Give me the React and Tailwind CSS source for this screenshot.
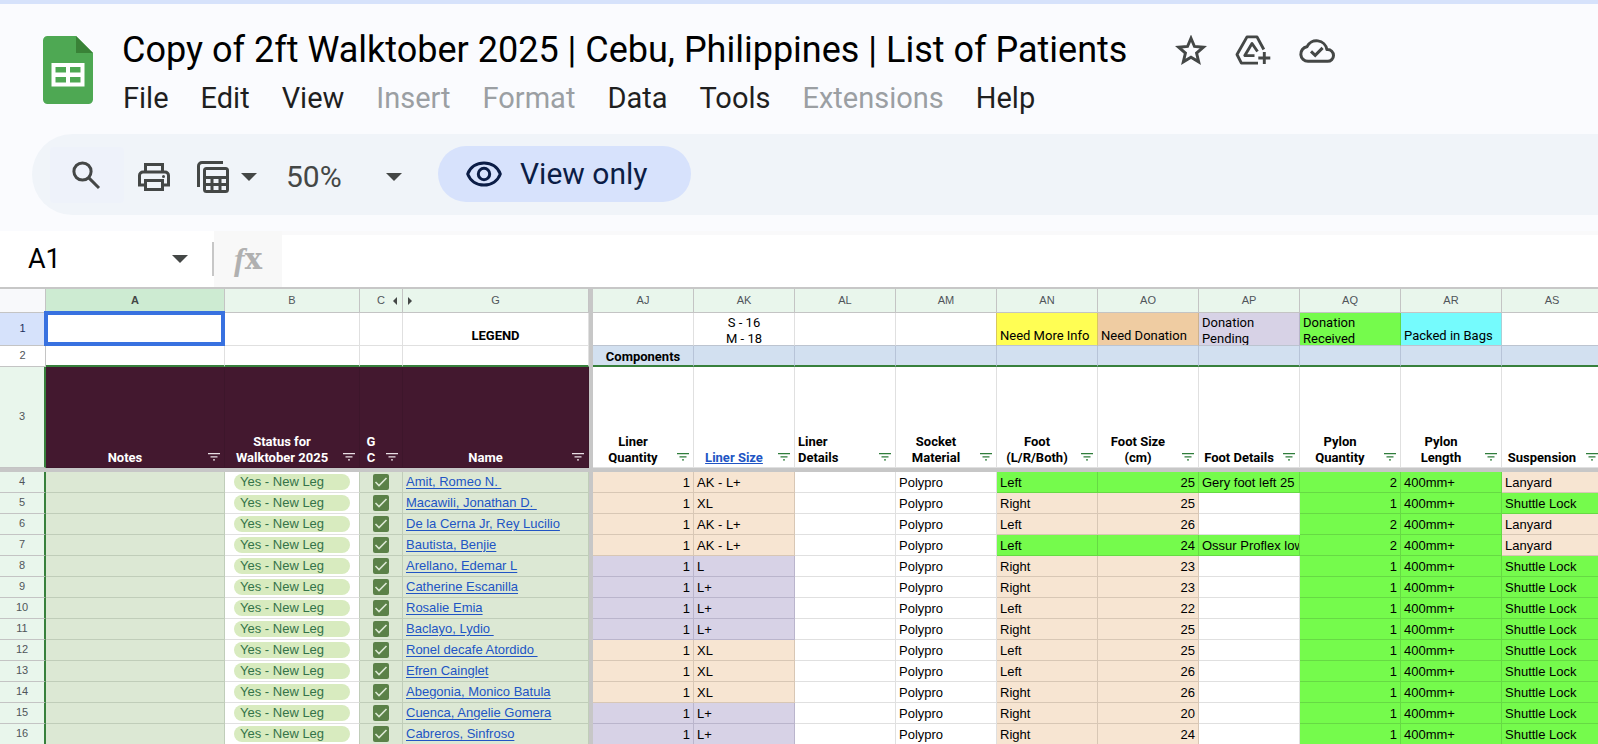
import React from "react";

const SANS = "font-['Roboto','Noto_Sans',sans-serif]";
const ARIAL = "font-['Liberation_Sans',Arial,sans-serif]";

/* Fill and grid-line classes for each kind of cell. */
const TONES = {
  white: { fill: "bg-white", line: "border-[#e0e0e0]" },
  sage: { fill: "bg-[#dce8d4]", line: "border-[#c0cdb9]" },
  plum: { fill: "bg-[#43182f]", line: "border-[#3d162b]" },
  sky: { fill: "bg-[#d2e0f0]", line: "border-[#b7c4d8]" },
  peach: { fill: "bg-[#f7e5d2]", line: "border-[#d8c7b5]" },
  lilac: { fill: "bg-[#d7d2e6]", line: "border-[#bab5cc]" },
  green: { fill: "bg-[#75fb4c]", line: "border-[#66da44]" },
  yellow: { fill: "bg-[#fffe54]", line: "border-[#d9c860]" },
  tan: { fill: "bg-[#efcca2]", line: "border-[#cdb38f]" },
  cyan: { fill: "bg-[#75fbfd]", line: "border-[#a9cfd6]" },
};

const MENUS = [
  ["File", true],
  ["Edit", true],
  ["View", true],
  ["Insert", false],
  ["Format", false],
  ["Data", true],
  ["Tools", true],
  ["Extensions", false],
  ["Help", true],
];

const FROZEN_COLS = ["A", "B", "C", "G"];
const SCROLL_COLS = ["AJ", "AK", "AL", "AM", "AN", "AO", "AP", "AQ", "AR", "AS"];

const LEGEND = [
  { tone: "white" },
  { tone: "white", lines: ["S - 16", "M - 18"], center: true },
  { tone: "white" },
  { tone: "white" },
  { tone: "yellow", lines: ["Need More Info"] },
  { tone: "tan", lines: ["Need Donation"] },
  { tone: "lilac", lines: ["Donation", "Pending"] },
  { tone: "green", lines: ["Donation", "Received"] },
  { tone: "cyan", lines: ["Packed in Bags"] },
  { tone: "white" },
];

const FROZEN_HEADS = [["Notes"], ["Status for", "Walktober 2025"], ["G", "C"], ["Name"]];
const SCROLL_HEADS = [
  { lines: ["Liner", "Quantity"] },
  { lines: ["Liner Size"], link: true },
  { lines: ["Liner", "Details"], left: true },
  { lines: ["Socket", "Material"] },
  { lines: ["Foot", "(L/R/Both)"] },
  { lines: ["Foot Size", "(cm)"] },
  { lines: ["Foot Details"] },
  { lines: ["Pylon", "Quantity"] },
  { lines: ["Pylon", "Length"] },
  { lines: ["Suspension"] },
];

const PATIENTS = [
  { name: "Amit, Romeo N.\u00a0", liner: "AK - L+", foot: "Left", size: 25, details: "Gery foot left 25", pylons: 2, received: true, lanyard: true },
  { name: "Macawili, Jonathan D.\u00a0", liner: "XL", foot: "Right", size: 25, pylons: 1 },
  { name: "De la Cerna Jr, Rey Lucilio", liner: "AK - L+", foot: "Left", size: 26, pylons: 2, lanyard: true },
  { name: "Bautista, Benjie", liner: "AK - L+", foot: "Left", size: 24, details: "Ossur Proflex low", pylons: 2, received: true, lanyard: true },
  { name: "Arellano, Edemar L", liner: "L", foot: "Right", size: 23, pylons: 1, pending: true },
  { name: "Catherine Escanilla", liner: "L+", foot: "Right", size: 23, pylons: 1, pending: true },
  { name: "Rosalie Emia", liner: "L+", foot: "Left", size: 22, pylons: 1, pending: true },
  { name: "Baclayo, Lydio\u00a0", liner: "L+", foot: "Right", size: 25, pylons: 1, pending: true },
  { name: "Ronel decafe Atordido\u00a0", liner: "XL", foot: "Left", size: 25, pylons: 1 },
  { name: "Efren Cainglet", liner: "XL", foot: "Left", size: 26, pylons: 1 },
  { name: "Abegonia, Monico Batula", liner: "XL", foot: "Right", size: 26, pylons: 1 },
  { name: "Cuenca, Angelie Gomera", liner: "L+", foot: "Right", size: 20, pylons: 1, pending: true },
  { name: "Cabreros, Sinfroso", liner: "L+", foot: "Right", size: 24, pylons: 1, pending: true },
];

function patientCells(p) {
  const liner = p.pending ? "lilac" : "peach";
  const foot = p.received ? "green" : "peach";
  return [
    { tone: liner, text: 1, right: true },
    { tone: liner, text: p.liner },
    { tone: "white", text: "" },
    { tone: "white", text: "Polypro" },
    { tone: foot, text: p.foot },
    { tone: foot, text: p.size, right: true },
    { tone: p.details ? "green" : "white", text: p.details || "" },
    { tone: "green", text: p.pylons, right: true },
    { tone: "green", text: "400mm+" },
    { tone: p.lanyard ? "peach" : "green", text: p.lanyard ? "Lanyard" : "Shuttle Lock" },
  ];
}

/* A white cell takes the grid line of a coloured neighbour on its right. */
function rightLine(cells, i) {
  const own = cells[i].tone;
  const next = cells[i + 1];
  return TONES[own === "white" && next ? next.tone : own].line;
}

function SheetsLogo() {
  return (
    <svg viewBox="0 0 50 68" className="h-[68px] w-[50px]" role="img" aria-label="Sheets">
      <path d="M4.500 0H33L50 17V63.500A4.500 4.500 0 0 1 45.500 68H4.500A4.500 4.500 0 0 1 0 63.500V4.500A4.500 4.500 0 0 1 4.500 0Z" fill="#4ea853" />
      <path d="M33 0L50 17H33Z" fill="#398237" />
      <path fillRule="evenodd" fill="#fff" d="M8.500 27H41.500V50.500H8.500ZM12.500 31V36.500H23V31ZM27 31V36.500H37.500V31ZM12.500 41V46.500H23V41ZM27 41V46.500H37.500V41Z" />
    </svg>
  );
}

function StarIcon() {
  return (
    <svg viewBox="1 0.500 30 28.500" className="h-[30px] w-8" aria-hidden="true">
      <path fill="none" stroke="#444746" strokeWidth="2.800" d="M16 3.600L19.300 11.400L27.800 12.100L21.300 17.700L23.300 26L16 21.600L8.700 26L10.700 17.700L4.200 12.100L12.700 11.400Z" />
    </svg>
  );
}

function DriveAddIcon() {
  return (
    <svg viewBox="0 0 36 32" className="h-8 w-9" fill="none" stroke="#444746" strokeWidth="2.900" aria-hidden="true">
      <path d="M28.800 15.500L22 2.900H12L2 20.500L6.400 29.100H23" strokeLinejoin="round" />
      <path d="M22.500 17.500L17 9.500L9.800 21.600H19.500" strokeLinejoin="round" />
      <path d="M29.300 18V30M23.300 24H35.300" />
    </svg>
  );
}

function CloudDoneIcon() {
  return (
    <svg viewBox="0 0 36 25" className="h-[25px] w-9" fill="none" stroke="#444746" strokeWidth="3" aria-hidden="true">
      <path d="M9 23.300A7.300 7.300 0 0 1 7.900 8.800A10.600 10.600 0 0 1 27.900 11.500H28.600A5.900 5.900 0 0 1 28.600 23.300Z" strokeLinejoin="round" />
      <path d="M12 13.400L16.200 17.400L23.600 9.900" />
    </svg>
  );
}

function SearchIcon() {
  return (
    <svg viewBox="0 0 30 30" className="h-[30px] w-[30px]" fill="none" stroke="#444746" strokeWidth="3" aria-hidden="true">
      <circle cx="11.500" cy="11.500" r="8.600" />
      <path d="M17.600 17.600L28 28" />
    </svg>
  );
}

function PrintIcon() {
  return (
    <svg viewBox="0 0 32 30" className="h-[30px] w-8" fill="none" stroke="#444746" strokeWidth="3" aria-hidden="true">
      <path d="M7.500 10V2.500H24.500V10" />
      <path d="M7 23H1.500V13.500A3.500 3.500 0 0 1 5 10H27A3.500 3.500 0 0 1 30.500 13.500V23H25" />
      <path d="M7.500 18.500H24.500V27.500H7.500Z" />
      <circle cx="25.500" cy="14.500" r="1.500" fill="#444746" stroke="none" />
    </svg>
  );
}

function FilterViewsIcon() {
  return (
    <svg viewBox="0 0 32 32" className="h-8 w-8" aria-hidden="true">
      <path d="M1.500 26V5A3.500 3.500 0 0 1 5 1.500H26" fill="none" stroke="#444746" strokeWidth="3" />
      <path fill="#444746" fillRule="evenodd" d="M9.500 6H28.500A3.500 3.500 0 0 1 32 9.500V28.500A3.500 3.500 0 0 1 28.500 32H9.500A3.500 3.500 0 0 1 6 28.500V9.500A3.500 3.500 0 0 1 9.500 6ZM9 9V15H29V9ZM9 18V22H13.500V18ZM16.500 18V22H21.500V18ZM24.500 18V22H29V18ZM9 25V29H13.500V25ZM16.500 25V29H21.500V25ZM24.500 25V29H29V25Z" />
    </svg>
  );
}

function EyeIcon() {
  return (
    <svg viewBox="0 0 36 26" className="h-[26px] w-9" fill="none" stroke="#0b1d46" strokeWidth="3" aria-hidden="true">
      <path d="M1.700 13C4.300 6 10.700 2 18 2S31.700 6 34.300 13C31.700 20 25.300 24 18 24S4.300 20 1.700 13Z" strokeLinejoin="round" />
      <circle cx="18" cy="13" r="5.700" />
    </svg>
  );
}

function Caret() {
  return (
    <svg viewBox="0 0 16 8" className="h-2 w-4" aria-hidden="true">
      <path d="M0 0H16L8 8Z" fill="#444746" />
    </svg>
  );
}

function FilterButton({ label, light }) {
  return (
    <button type="button" aria-label={"Filter " + label} className="absolute right-1 bottom-1 flex h-3 w-3 items-center">
      <svg viewBox="0 0 12 8" className="h-2 w-3" aria-hidden="true">
        <path fill={light ? "#e9dfe5" : "#2f7d3b"} d="M0 0H12V1.200H0ZM2.500 3.300H9.500V4.500H2.500ZM5 6.300H7V7.500H5Z" />
      </svg>
    </button>
  );
}

function HeadCell({ lines, tone, link, left }) {
  const label = lines.join(" ");
  const color = tone === "plum" ? "text-white" : "text-black";
  return (
    <th scope="col" className={`relative border-r border-b p-0 ${TONES[tone].fill} ${TONES[tone].line}`}>
      <div className={`flex h-[100px] flex-col justify-end pr-5 pb-px text-[13px] leading-4 font-bold whitespace-nowrap ${SANS} ${color} ${left ? "items-start pl-[3px]" : "items-center"}`}>
        {link ? (
          <a href="#liner-size" className="text-[#2155c4] underline">{label}</a>
        ) : (
          lines.map((l) => <span key={l}>{l}</span>)
        )}
      </div>
      <FilterButton label={label} light={tone === "plum"} />
    </th>
  );
}

function RowNumber({ n, className = "", height }) {
  return (
    <th scope="row" className={`border-b border-b-[#c4c4c4] p-0 text-[11px] font-normal ${className}`}>
      <div className={`flex items-center justify-center pb-[2px] ${height}`}>{n}</div>
    </th>
  );
}

const FREEZE = "bg-[#c7c7c7] p-0";

export default function App() {
  return (
    <div className={`min-h-screen w-full overflow-hidden bg-[#fafbfe] ${SANS}`}>
      <header className="border-t-4 border-[#d6e2fb]">
        <div className="flex items-start pt-8 pl-[43px]">
          <SheetsLogo />
          <div className="-mt-2 ml-[29px]">
            <div className="flex items-center">
              <h1 className="text-[36px] leading-[44px] whitespace-nowrap text-black">
                Copy of 2ft Walktober 2025 | Cebu, Philippines | List of Patients
              </h1>
              <div className="ml-12 flex items-center gap-7">
                <button type="button" aria-label="Star"><StarIcon /></button>
                <button type="button" aria-label="Add shortcut to Drive"><DriveAddIcon /></button>
                <button type="button" aria-label="See document status"><CloudDoneIcon /></button>
              </div>
            </div>
            <nav className="mt-2 ml-px flex gap-8 text-[29px] leading-9">
              {MENUS.map(([name, on]) => (
                <button key={name} type="button" disabled={!on} className={on ? "text-[#1f1f1f]" : "text-[#9b9fa3]"}>
                  {name}
                </button>
              ))}
            </nav>
          </div>
        </div>

        <div className="mt-[18px] ml-8 flex h-[81px] items-center rounded-l-full bg-[#f0f4f9] pl-[18px]">
          <button type="button" aria-label="Search the menus" className="flex h-14 w-[74px] items-center justify-center rounded bg-[#eef2fa] pr-[2px]">
            <SearchIcon />
          </button>
          <button type="button" aria-label="Print" className="mt-1 ml-[14px]"><PrintIcon /></button>
          <button type="button" aria-label="Filter views" className="mt-1 ml-[27px] flex items-center gap-3">
            <FilterViewsIcon />
            <Caret />
          </button>
          <button type="button" aria-label="Zoom" className="mt-1 ml-[29px] flex items-center text-[30px] leading-8 text-[#444746]">
            <span className="w-[100px] text-left">50%</span>
            <Caret />
          </button>
          <button type="button" className="mb-[2px] ml-9 flex h-14 w-[253px] items-center gap-[18px] rounded-full bg-[#d7e2fc] pl-7 text-[30px] text-[#0b1d46]">
            <EyeIcon />
            View only
          </button>
        </div>
      </header>

      <div className="mt-4 flex h-14 items-stretch bg-white">
        <div className="flex w-[214px] items-center pl-7">
          <input aria-label="Name box" defaultValue="A1" className="w-36 bg-transparent text-[27px] text-black outline-none" />
          <button type="button" aria-label="Named ranges"><Caret /></button>
          <span className="ml-auto h-[34px] w-[2px] bg-[#c7c7c7]" />
        </div>
        <div className="flex w-[68px] items-center justify-center bg-[#f8f8f8] text-[#b0b0b0]">
          <span className="font-['Liberation_Serif',serif] text-[32px] leading-8 font-bold italic">f</span>
          <span className="font-['DejaVu_Serif',serif] text-[29px] leading-8 font-bold">x</span>
        </div>
        <input aria-label="Formula" className="min-w-0 flex-1 border-t-4 border-[#f9f9fa] bg-white px-3 outline-none" />
      </div>

      <main className={`overflow-hidden border-t-2 border-[#c7c7c7] ${ARIAL}`}>
        <table className="w-[1603px] table-fixed border-separate border-spacing-0 text-[13px] leading-4 text-black">
          <colgroup>
            <col className="w-[46px]" />
            <col className="w-[179px]" />
            <col className="w-[135px]" />
            <col className="w-[43px]" />
            <col className="w-[186px]" />
            <col className="w-[4px]" />
            {SCROLL_COLS.map((c) => <col key={c} className="w-[101px]" />)}
          </colgroup>
          <thead>
            <tr className="text-[11px] text-[#50555a]">
              <td className="border-r border-b border-[#c4c4c4] bg-[#f8f9fb] p-0" />
              {FROZEN_COLS.map((c) => (
                <th key={c} scope="col" className={`relative border-r border-b border-[#c4c4c4] p-0 ${c === "A" ? "bg-[#cdebd2] font-bold text-[#444746]" : "bg-[#e9f6ec] font-normal"}`}>
                  <div className="flex h-[23px] items-center justify-center pb-[2px]">{c}</div>
                  {c === "C" && (
                    <button type="button" aria-label="Show hidden columns" className="absolute top-2 right-[5px]">
                      <svg viewBox="0 0 4 8" className="h-2 w-1" aria-hidden="true"><path d="M4 0V8L0 4Z" fill="#444746" /></svg>
                    </button>
                  )}
                  {c === "G" && (
                    <button type="button" aria-label="Show hidden columns" className="absolute top-2 left-[5px]">
                      <svg viewBox="0 0 4 8" className="h-2 w-1" aria-hidden="true"><path d="M0 0V8L4 4Z" fill="#444746" /></svg>
                    </button>
                  )}
                </th>
              ))}
              <td className={FREEZE} />
              {SCROLL_COLS.map((c) => (
                <th key={c} scope="col" className="border-r border-b border-[#c4c4c4] bg-[#e9f6ec] p-0 font-normal">
                  <div className="flex h-[23px] items-center justify-center pb-[2px]">{c}</div>
                </th>
              ))}
            </tr>
            <tr>
              <RowNumber n="1" height="h-8" className="border-r border-r-[#c4c4c4] bg-[#d6e2fb] font-bold text-[#1c2f5c]" />
              <td className="relative border-r border-b border-[#e0e0e0] bg-white p-0">
                <div className="absolute -top-0.5 -right-px -bottom-px -left-0.5 border-4 border-[#3871e0]" />
              </td>
              <td className="border-r border-b border-[#e0e0e0] bg-white p-0" />
              <td className="border-r border-b border-[#e0e0e0] bg-white p-0" />
              <td className="border-r border-b border-[#e0e0e0] bg-white p-0">
                <div className={`flex h-8 items-end justify-center pb-px font-bold ${SANS}`}>LEGEND</div>
              </td>
              <td className={FREEZE} />
              {LEGEND.map((cell, i) => (
                <td key={i} className={`border-r border-b border-b-[#bcc4d0] p-0 ${TONES[cell.tone].fill} ${rightLine(LEGEND, i)}`}>
                  <div className={`flex h-8 flex-col overflow-hidden whitespace-nowrap ${SANS} ${cell.center ? "items-center" : "pl-[3px]"} ${cell.lines && cell.lines.length > 1 ? "justify-start pt-[2px]" : "justify-end pb-px"}`}>
                    {(cell.lines || []).map((l) => <span key={l} className="shrink-0">{l}</span>)}
                  </div>
                </td>
              ))}
            </tr>
            <tr>
              <RowNumber n="2" height="h-5" className="border-r border-r-[#c4c4c4] bg-white text-[#50555a]" />
              {FROZEN_COLS.map((c) => (
                <td key={c} className="border-r border-b-2 border-r-[#e0e0e0] border-b-[#37803c] bg-white p-0" />
              ))}
              <td className={FREEZE} />
              {SCROLL_COLS.map((c) => (
                <td key={c} className="border-r border-b-2 border-r-[#b7c4d8] border-b-[#37803c] bg-[#d2e0f0] p-0">
                  <div className={`flex h-[19px] items-center justify-center pt-[3px] font-bold ${SANS}`}>{c === "AJ" ? "Components" : ""}</div>
                </td>
              ))}
            </tr>
            <tr>
              <RowNumber n="3" height="h-[100px]" className="border-r-2 border-r-[#37803c] bg-[#e9f6ec] text-[#50555a]" />
              {FROZEN_HEADS.map((lines) => <HeadCell key={lines[0]} lines={lines} tone="plum" />)}
              <td className={FREEZE} />
              {SCROLL_HEADS.map((h, i) => <HeadCell key={i} lines={h.lines} link={h.link} left={h.left} tone="white" />)}
            </tr>
            <tr>
              <td colSpan={16} className={FREEZE}><div className="h-1" /></td>
            </tr>
          </thead>
          <tbody>
            {PATIENTS.map((p, r) => {
              const cells = patientCells(p);
              return (
                <tr key={p.name}>
                  <RowNumber n={r + 4} height="h-5" className="border-r-2 border-r-[#37803c] bg-[#e9f6ec] text-[#50555a]" />
                  <td className="border-r border-b border-[#c0cdb9] bg-[#dce8d4] p-0" />
                  <td className="border-r border-b border-r-[#c0cdb9] border-b-[#e0e0e0] bg-white p-0">
                    <div className="flex h-5 items-center pl-[9px]">
                      <span className="h-4 w-[116px] rounded-full bg-[#d8ebbf] pl-[6px] text-[#347349]">Yes - New Leg</span>
                    </div>
                  </td>
                  <td className="border-r border-b border-[#c0cdb9] bg-[#dce8d4] p-0">
                    <label className="mx-auto grid h-5 w-4 items-center">
                      <input type="checkbox" defaultChecked aria-label={"GC " + p.name} className="col-start-1 row-start-1 h-4 w-4 appearance-none rounded-[2px] bg-[#5b8148]" />
                      <svg viewBox="0 0 16 16" className="pointer-events-none col-start-1 row-start-1 h-4 w-4" aria-hidden="true">
                        <path d="M2.500 8L6 11.500L13.500 4" fill="none" stroke="#dce8d4" strokeWidth="1.600" />
                      </svg>
                    </label>
                  </td>
                  <td className="border-r border-b border-[#c0cdb9] bg-[#dce8d4] p-0 pl-[3px] whitespace-nowrap">
                    <a href={"#patient-" + (r + 4)} className="text-[#2155c4] underline underline-offset-2">{p.name}</a>
                  </td>
                  <td className={FREEZE} />
                  {cells.map((cell, i) => (
                    <td key={i} className={`border-r border-b p-0 ${TONES[cell.tone].fill} ${TONES[cell.tone].line} ${rightLine(cells, i)}`}>
                      <div className={`h-5 overflow-hidden pt-[3px] whitespace-nowrap ${cell.right ? "pr-[3px] text-right" : "pl-[3px]"}`}>{cell.text}</div>
                    </td>
                  ))}
                </tr>
              );
            })}
          </tbody>
        </table>
      </main>
    </div>
  );
}
